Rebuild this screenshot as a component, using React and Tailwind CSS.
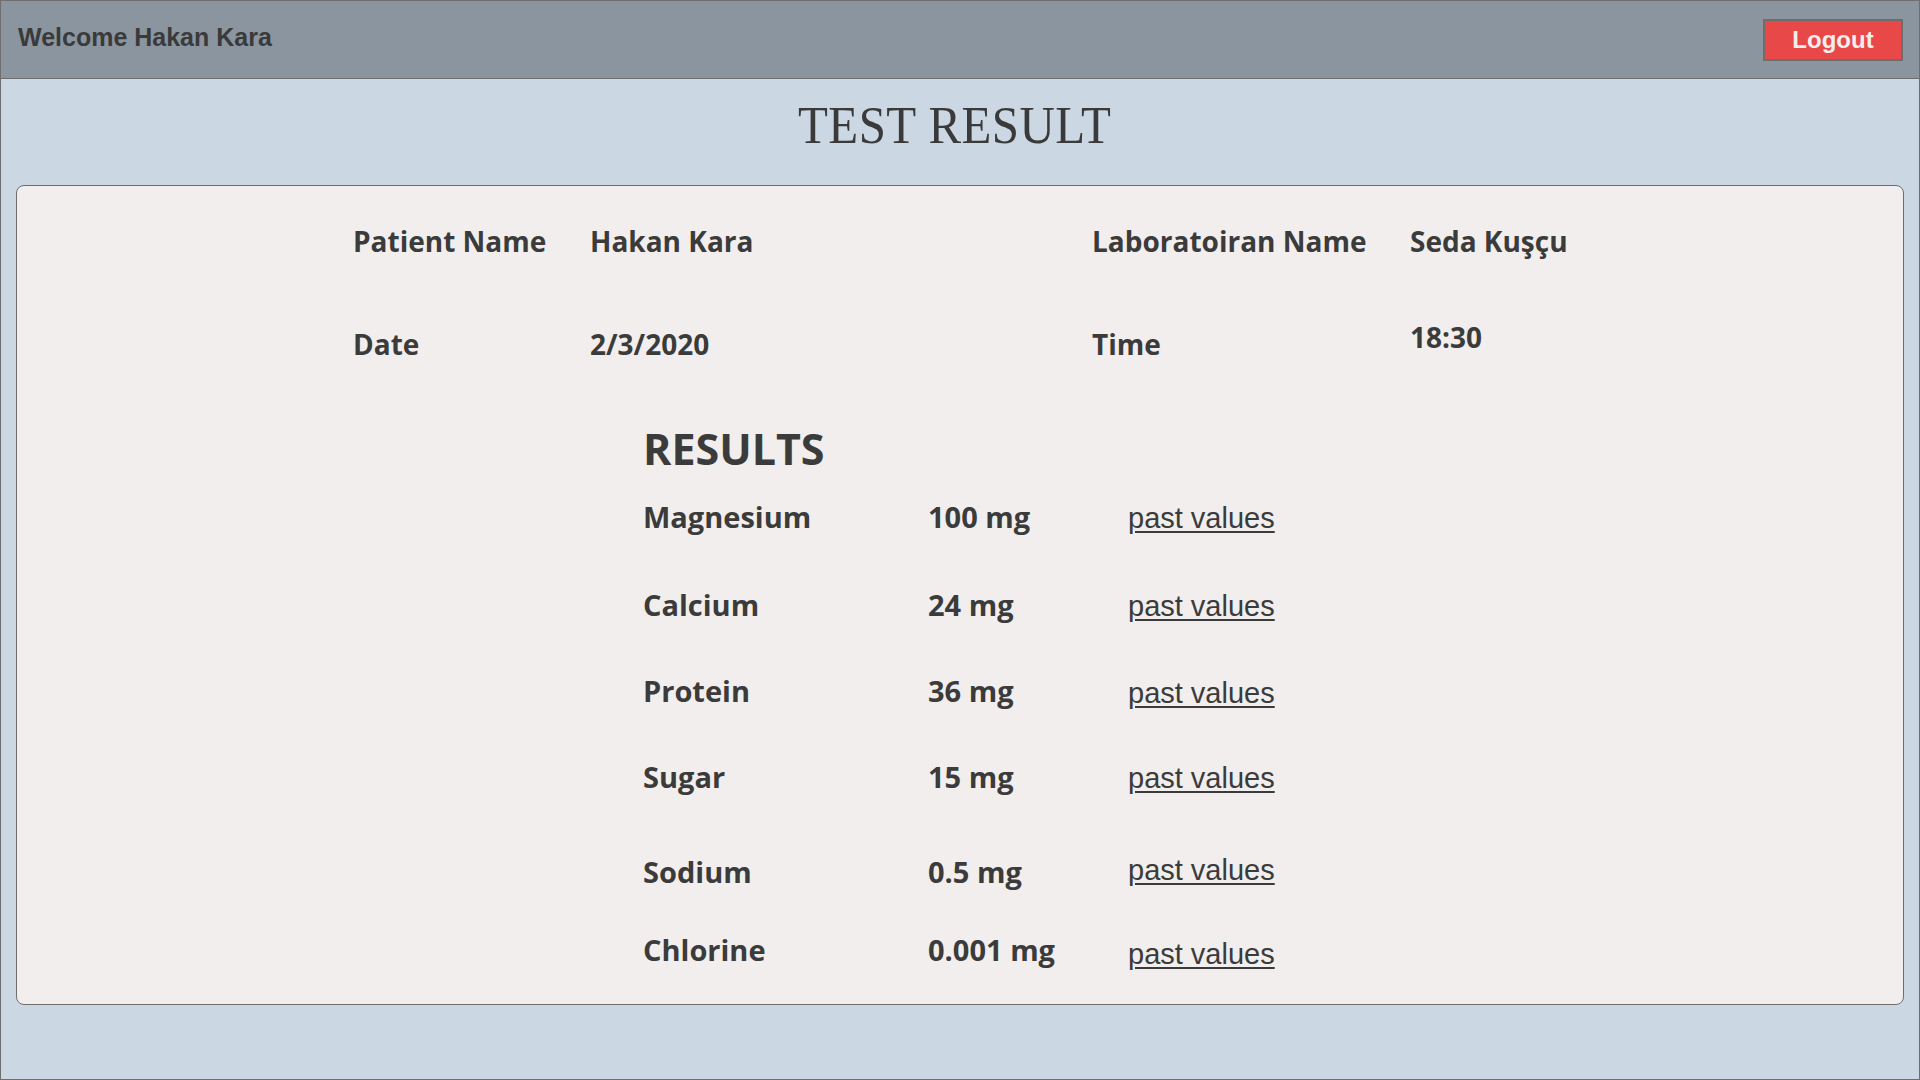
import React from 'react';

const results = [
  { name: 'Magnesium', amount: '100 mg', gap: 'mt-[24px]', nudge: 'translate-y-[0px]' },
  { name: 'Calcium', amount: '24 mg', gap: 'mt-[53px]', nudge: 'translate-y-[0px]' },
  { name: 'Protein', amount: '36 mg', gap: 'mt-[51px]', nudge: 'translate-y-[1px]' },
  { name: 'Sugar', amount: '15 mg', gap: 'mt-[51px]', nudge: 'translate-y-[0px]' },
  { name: 'Sodium', amount: '0.5 mg', gap: 'mt-[60px]', nudge: 'translate-y-[-3px]' },
  { name: 'Chlorine', amount: '0.001 mg', gap: 'mt-[43px]', nudge: 'translate-y-[3px]' },
];

export default function App() {
  return (
    <div className="h-[1080px] w-full border border-[#6e6e6e] bg-[#cbd8e4] flex flex-col text-[#3b3b3b] font-['Open_Sans',sans-serif] overflow-hidden">
      {/* Header */}
      <header className="h-[78px] shrink-0 bg-[#8b959f] border-b border-[#6e6e6e] flex justify-between items-start pl-[17px] pr-[16px]">
        <span className="mt-[24px] whitespace-nowrap text-[25px] leading-[25px] font-bold font-['Liberation_Sans',Arial,sans-serif] text-[#3a3a3a]">
          Welcome Hakan Kara
        </span>
        <button className="mt-[18px] w-[140px] h-[42px] border-2 border-[#6d6d6d] bg-[#e84848] text-[#f4eeee] text-[24px] leading-none font-bold font-['Liberation_Sans',Arial,sans-serif] flex items-center justify-center">
          Logout
        </button>
      </header>

      {/* Title */}
      <div className="h-[106px] shrink-0 flex justify-center pt-[21px] pr-[11px]">
        <h1 className="inline-block scale-x-[0.94] text-[52px] leading-[52px] font-['Liberation_Serif',serif] tracking-[0.5px] text-[#3a3a3a]">
          TEST RESULT
        </h1>
      </div>

      {/* Card */}
      <div className="mx-[15px] h-[820px] shrink-0 rounded-[8px] border border-[#6e6e6e] bg-[#f1eeed] pt-[38px] pl-[336px] font-bold">
        <div className="flex h-[34px] text-[28px] leading-[34px] whitespace-nowrap">
          <div className="w-[237px]">Patient Name</div>
          <div className="w-[502px]">Hakan Kara</div>
          <div className="w-[318px]">Laboratoiran Name</div>
          <div>Seda Kuşçu</div>
        </div>
        <div className="flex items-start h-[34px] mt-[69px] text-[28px] leading-[34px] whitespace-nowrap">
          <div className="w-[237px]">Date</div>
          <div className="w-[502px]">2/3/2020</div>
          <div className="w-[318px]">Time</div>
          <div className="-mt-[7px]">18:30</div>
        </div>

        {/* Results */}
        <div className="ml-[290px]">
          <h2 className="mt-[62px] h-[52px] text-[43px] leading-[52px]">RESULTS</h2>
          {results.map((r) => (
            <div key={r.name} className={`flex items-baseline h-[35px] whitespace-nowrap ${r.gap}`}>
              <div className="w-[285px] text-[29px] leading-[35px]">{r.name}</div>
              <div className="w-[200px] text-[29px] leading-[35px]">{r.amount}</div>
              <a
                href="#"
                className={`inline-block text-[29px] leading-[35px] font-normal font-['Liberation_Sans',Arial,sans-serif] underline decoration-2 underline-offset-[3px] text-[#3b3b3b] ${r.nudge}`}
              >
                past values
              </a>
            </div>
          ))}
        </div>
      </div>
    </div>
  );
}
